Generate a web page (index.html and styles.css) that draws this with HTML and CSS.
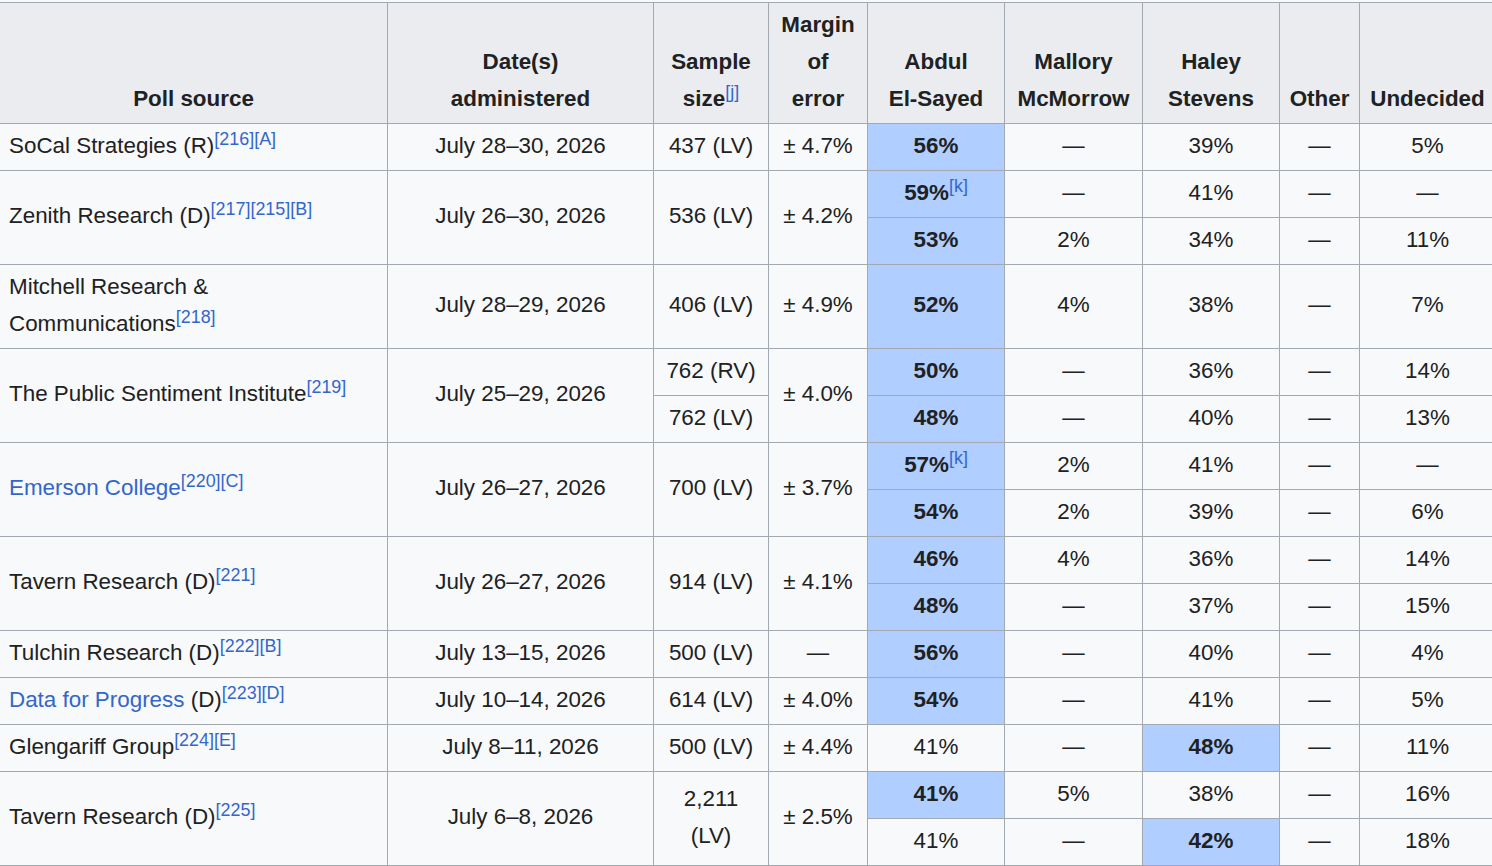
FILE: index.html
```html
<!DOCTYPE html>
<html lang="en">
<head>
<meta charset="utf-8">
<title>Polling</title>
<link rel="stylesheet" href="styles.css">
</head>
<body>
<table class="wikitable">
  <colgroup>
    <col class="c-source">
    <col class="c-date">
    <col class="c-sample">
    <col class="c-moe">
    <col class="c-cand">
    <col class="c-cand2">
    <col class="c-cand">
    <col class="c-other">
    <col class="c-undec">
  </colgroup>
  <thead>
    <tr>
      <th>Poll source</th>
      <th>Date(s)<br>administered</th>
      <th>Sample<br>size<sup class="ref">[j]</sup></th>
      <th>Margin<br>of<br>error</th>
      <th>Abdul<br>El-Sayed</th>
      <th>Mallory<br>McMorrow</th>
      <th>Haley<br>Stevens</th>
      <th>Other</th>
      <th>Undecided</th>
    </tr>
  </thead>
  <tbody>
    <tr>
      <td class="src">SoCal Strategies (R)<sup class="ref">[216][A]</sup></td>
      <td>July 28–30, 2026</td>
      <td>437 (LV)</td>
      <td>±&nbsp;4.7%</td>
      <td class="hl">56%</td>
      <td>—</td>
      <td>39%</td>
      <td>—</td>
      <td>5%</td>
    </tr>
    <tr>
      <td class="src" rowspan="2">Zenith Research (D)<sup class="ref">[217][215][B]</sup></td>
      <td rowspan="2">July 26–30, 2026</td>
      <td rowspan="2">536 (LV)</td>
      <td rowspan="2">±&nbsp;4.2%</td>
      <td class="hl">59%<sup class="ref">[k]</sup></td>
      <td>—</td>
      <td>41%</td>
      <td>—</td>
      <td>—</td>
    </tr>
    <tr>
      <td class="hl">53%</td>
      <td>2%</td>
      <td>34%</td>
      <td>—</td>
      <td>11%</td>
    </tr>
    <tr>
      <td class="src">Mitchell Research &amp; Communications<sup class="ref">[218]</sup></td>
      <td>July 28–29, 2026</td>
      <td>406 (LV)</td>
      <td>±&nbsp;4.9%</td>
      <td class="hl">52%</td>
      <td>4%</td>
      <td>38%</td>
      <td>—</td>
      <td>7%</td>
    </tr>
    <tr>
      <td class="src" rowspan="2">The Public Sentiment Institute<sup class="ref">[219]</sup></td>
      <td rowspan="2">July 25–29, 2026</td>
      <td>762 (RV)</td>
      <td rowspan="2">±&nbsp;4.0%</td>
      <td class="hl">50%</td>
      <td>—</td>
      <td>36%</td>
      <td>—</td>
      <td>14%</td>
    </tr>
    <tr>
      <td>762 (LV)</td>
      <td class="hl">48%</td>
      <td>—</td>
      <td>40%</td>
      <td>—</td>
      <td>13%</td>
    </tr>
    <tr>
      <td class="src" rowspan="2"><a href="#">Emerson College</a><sup class="ref">[220][C]</sup></td>
      <td rowspan="2">July 26–27, 2026</td>
      <td rowspan="2">700 (LV)</td>
      <td rowspan="2">±&nbsp;3.7%</td>
      <td class="hl">57%<sup class="ref">[k]</sup></td>
      <td>2%</td>
      <td>41%</td>
      <td>—</td>
      <td>—</td>
    </tr>
    <tr>
      <td class="hl">54%</td>
      <td>2%</td>
      <td>39%</td>
      <td>—</td>
      <td>6%</td>
    </tr>
    <tr>
      <td class="src" rowspan="2">Tavern Research (D)<sup class="ref">[221]</sup></td>
      <td rowspan="2">July 26–27, 2026</td>
      <td rowspan="2">914 (LV)</td>
      <td rowspan="2">±&nbsp;4.1%</td>
      <td class="hl">46%</td>
      <td>4%</td>
      <td>36%</td>
      <td>—</td>
      <td>14%</td>
    </tr>
    <tr>
      <td class="hl">48%</td>
      <td>—</td>
      <td>37%</td>
      <td>—</td>
      <td>15%</td>
    </tr>
    <tr>
      <td class="src">Tulchin Research (D)<sup class="ref">[222][B]</sup></td>
      <td>July 13–15, 2026</td>
      <td>500 (LV)</td>
      <td>—</td>
      <td class="hl">56%</td>
      <td>—</td>
      <td>40%</td>
      <td>—</td>
      <td>4%</td>
    </tr>
    <tr>
      <td class="src"><a href="#">Data for Progress</a> (D)<sup class="ref">[223][D]</sup></td>
      <td>July 10–14, 2026</td>
      <td>614 (LV)</td>
      <td>±&nbsp;4.0%</td>
      <td class="hl">54%</td>
      <td>—</td>
      <td>41%</td>
      <td>—</td>
      <td>5%</td>
    </tr>
    <tr>
      <td class="src">Glengariff Group<sup class="ref">[224][E]</sup></td>
      <td>July 8–11, 2026</td>
      <td>500 (LV)</td>
      <td>±&nbsp;4.4%</td>
      <td>41%</td>
      <td>—</td>
      <td class="hl">48%</td>
      <td>—</td>
      <td>11%</td>
    </tr>
    <tr>
      <td class="src" rowspan="2">Tavern Research (D)<sup class="ref">[225]</sup></td>
      <td rowspan="2">July 6–8, 2026</td>
      <td rowspan="2">2,211 (LV)</td>
      <td rowspan="2">±&nbsp;2.5%</td>
      <td class="hl">41%</td>
      <td>5%</td>
      <td>38%</td>
      <td>—</td>
      <td>16%</td>
    </tr>
    <tr>
      <td>41%</td>
      <td>—</td>
      <td class="hl">42%</td>
      <td>—</td>
      <td>18%</td>
    </tr>
  </tbody>
</table>
</body>
</html>
```

FILE: styles.css
```css
html, body {
  overflow: hidden;
}
body {
  margin: 2px 0 0 -1px;
  background: #f8f9fa;
  color: #202122;
  font-family: "Liberation Sans", Arial, Helvetica, sans-serif;
  font-size: 22.4px;
}
.wikitable {
  border-collapse: collapse;
  table-layout: fixed;
  width: 1496px;
  background: #f8f9fa;
  color: #202122;
  line-height: 37px;
}
.c-source { width: 388px; }
.c-date { width: 266px; }
.c-sample { width: 115px; }
.c-moe { width: 99px; }
.c-cand { width: 137px; }
.c-cand2 { width: 138px; }
.c-other { width: 80px; }
.c-undec { width: 136px; }

.wikitable th,
.wikitable td {
  border: 1px solid #a2a9b1;
  padding: 2.5px 9px 6.5px;
  text-align: center;
  vertical-align: middle;
}
.wikitable th {
  background: #eaecf0;
  font-weight: bold;
  vertical-align: bottom;
}
.wikitable td.src {
  text-align: left;
}
.wikitable td.hl {
  background: #b0ceff;
  font-weight: bold;
}
a {
  color: #3366cc;
  text-decoration: none;
}
sup.ref {
  font-size: 80%;
  line-height: 1;
  vertical-align: super;
  font-weight: normal;
  color: #3366cc;
  white-space: nowrap;
}
```
